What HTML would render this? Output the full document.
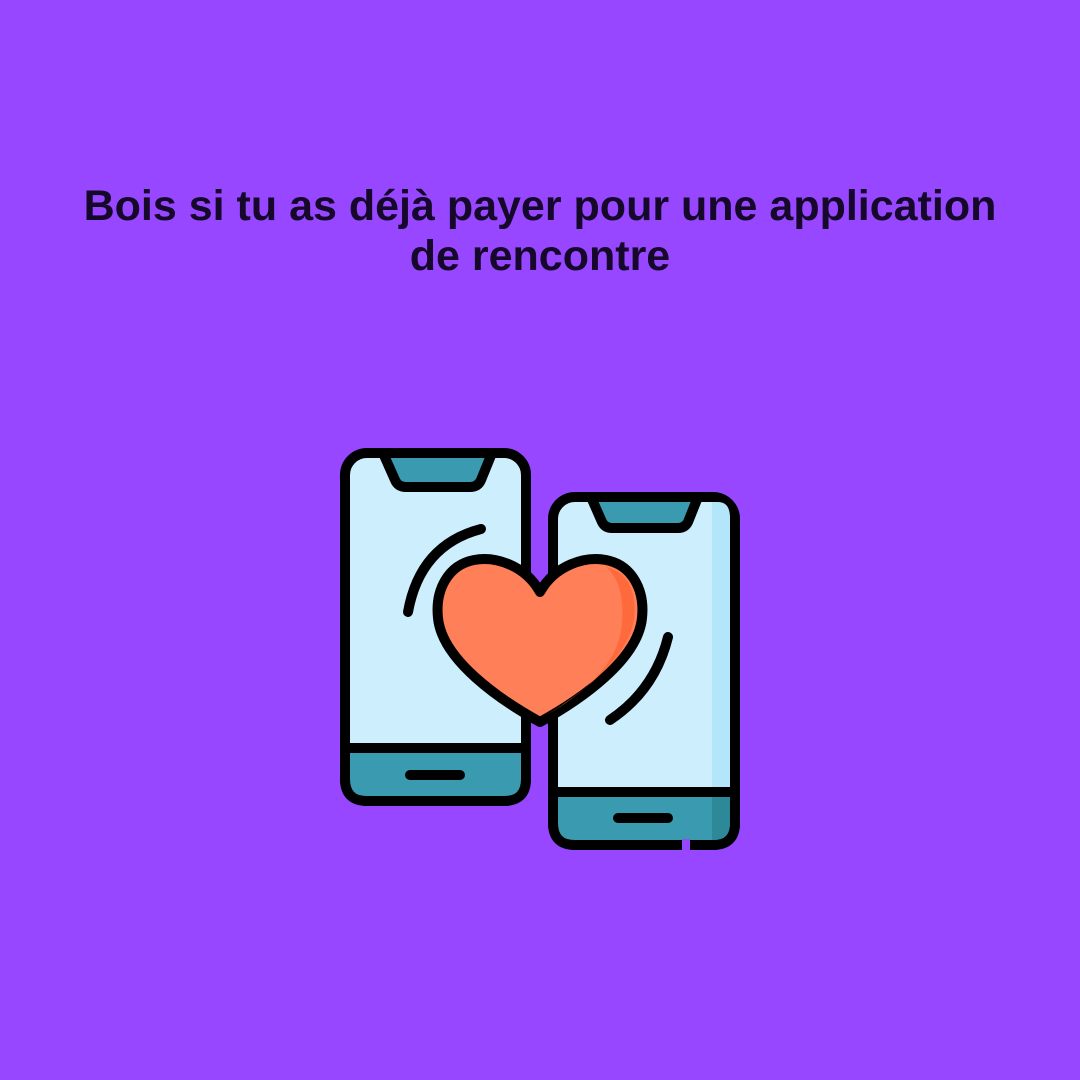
<!DOCTYPE html>
<html><head><meta charset="utf-8"><style>
html,body{margin:0;padding:0;}
body{width:1080px;height:1080px;background:#9747ff;position:relative;overflow:hidden;}
.t{position:absolute;left:0;width:1080px;top:181px;text-align:center;font-family:"Liberation Sans",sans-serif;font-weight:bold;font-size:43px;line-height:50px;color:#15082a;}
svg{position:absolute;left:0;top:0;}
</style></head><body>
<div class="t">Bois si tu as déjà payer pour une application<br>de rencontre</div>
<svg width="1080" height="1080" viewBox="0 0 1080 1080">
<g stroke="#000" stroke-width="10" stroke-linecap="round" stroke-linejoin="round">
<rect x="345" y="453" width="181" height="348" rx="22" fill="#cdeffd"/>
<path d="M345 748 H526 V779 Q526 801 504 801 H367 Q345 801 345 779 Z" fill="#3a9bb0"/>
<path d="M383 453 L395 480 Q398 487 406 487 L470 487 Q478 487 481 480 L492 453 Z" fill="#3a9bb0"/>
<line x1="410" y1="775" x2="460" y2="775"/>
<rect x="553" y="497" width="182" height="348" rx="22" fill="#cdeffd"/>
<path d="M712 502 H718 Q730 502 730 518 V792 H712 Z" fill="#b4e6fb" stroke="none"/>
<path d="M553 792 H735 V823 Q735 845 713 845 H575 Q553 845 553 823 Z" fill="#3a9bb0"/>
<path d="M712 797 H730 V823 Q730 840 713 840 H712 Z" fill="#2d8898" stroke="none"/>
<line x1="682" y1="845" x2="690" y2="845" stroke="#9747ff" stroke-width="12" stroke-linecap="butt"/>
<path d="M591 497 L602 522 Q605 528 612 528 L678 528 Q685 528 688 522 L698 497 Z" fill="#3a9bb0"/>
<line x1="618" y1="818" x2="668" y2="818"/>
<path d="M540 592 C525 565 495 556 474 560 C448 565 435 590 438 618 C442 660 500 700 540 722 C580 700 638 660 642 618 C645 590 632 565 606 560 C585 556 555 565 540 592 Z" fill="#ff7f58"/>
<path d="M606 567 C628 572 637 592 634 618 C630 655 585 692 545 716 C590 690 620 660 622 622 C624 595 618 577 606 567 Z" fill="#ff6a3d" stroke="none"/>
<path d="M481 529 Q420 545 408 612" fill="none"/>
<path d="M668 637 Q655 690 610 720" fill="none"/>
</g>
</svg>
</body></html>
